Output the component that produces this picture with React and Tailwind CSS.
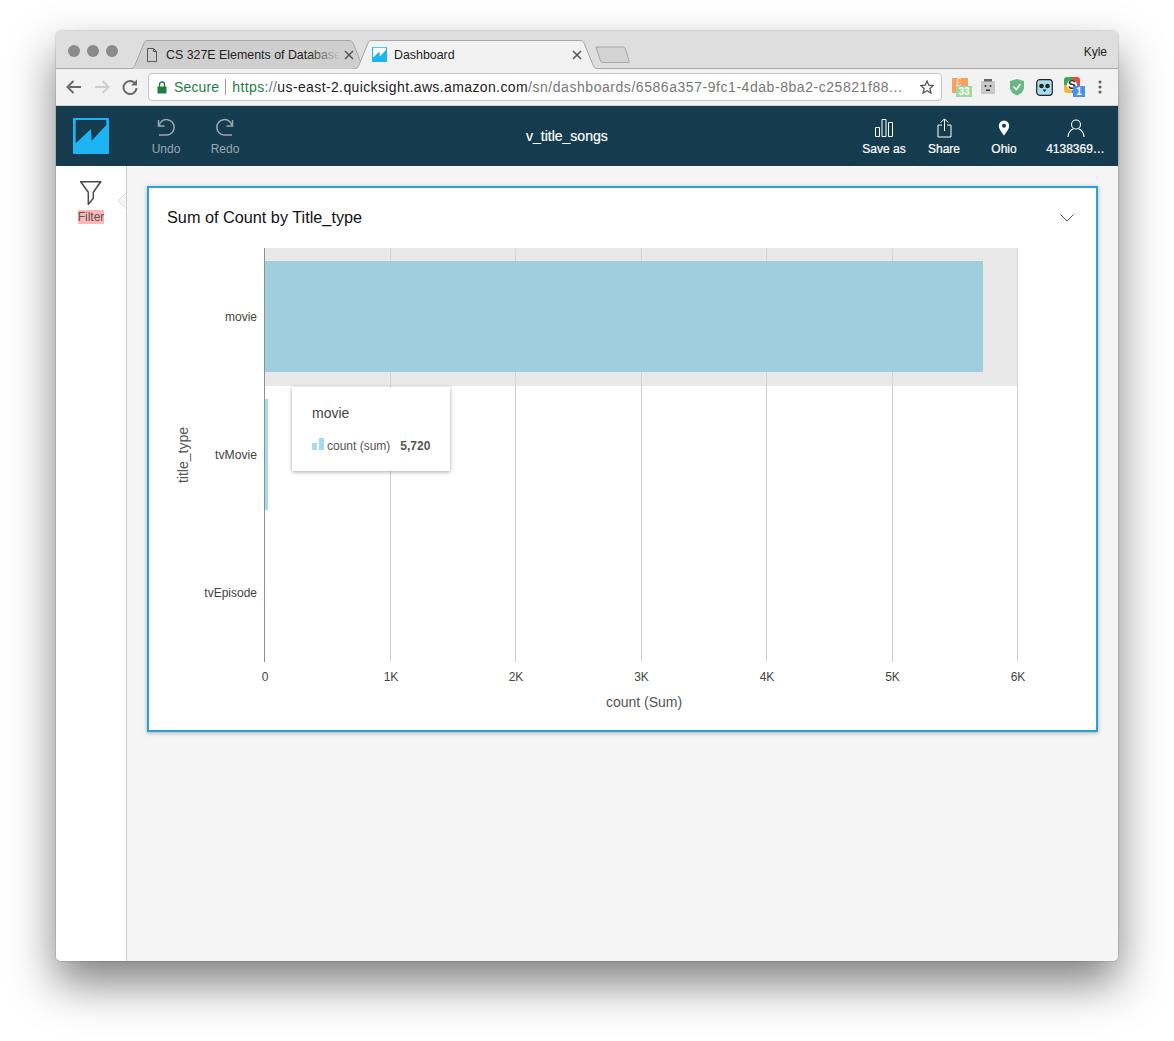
import React from "react";

const FONT = "font-['Liberation_Sans',Arial,sans-serif]";

function Logo({ size = 36, className = "", mark = "#153c4e" }) {
  return (
    <svg width={size} height={size} viewBox="0 0 36 36" className={className}>
      <rect width="36" height="36" rx="1" fill="#1cb4f2" />
      <path d="M2.700 2H33.300V7L18.700 22.700L18 11L2.700 25.300Z" fill={mark} />
    </svg>
  );
}

function TabShape({ w, fill, stroke }) {
  const d = `M0 29 H2 C5 29 6 27 7 25 L16 3 C17 1 18 0.500 20 0.500 H${w - 20} C${w - 18} 0.500 ${w - 17} 1 ${w - 16} 3 L${w - 7} 25 C${w - 6} 27 ${w - 5} 29 ${w - 2} 29 H${w}`;
  return (
    <svg className="absolute inset-0" width={w} height="29" viewBox={`0 0 ${w} 29`}>
      <path d={d} fill={fill} stroke={stroke} strokeWidth="1" />
    </svg>
  );
}

function CloseX({ color = "#555" }) {
  return (
    <svg width="10" height="10" viewBox="0 0 10 10" className="shrink-0">
      <path d="M1 1L9 9M9 1L1 9" stroke={color} strokeWidth="1.500" />
    </svg>
  );
}

function NavAction({ icon, label, className = "", dim }) {
  return (
    <div className={`flex flex-col items-center h-[60px] pt-[11px] ${className}`}>
      <div className="h-[22px] flex items-center justify-center">{icon}</div>
      <div className={`mt-[2px] text-[12px] leading-[16px] whitespace-nowrap ${dim ? "text-[#9aa7ae]" : "text-white font-medium [-webkit-text-stroke:0.2px_white]"}`}>
        {label}
      </div>
    </div>
  );
}

function Extensions() {
  return (
    <div className="flex items-center h-full">
      <div className="relative w-[22px] h-[20px] ml-[9px]">
        <div className="absolute left-[1px] top-[1px] w-[16px] h-[15px] bg-[#f5a15f]" />
        <div className="absolute left-[5px] top-0 text-[10px] leading-[12px] text-[#fde6d0]">£</div>
        <div className="absolute left-[5px] top-[9px] w-[16px] h-[11px] bg-[#9fd8a0] text-white text-[10px] leading-[11px] text-center font-bold">33</div>
      </div>
      <svg width="16" height="18" viewBox="0 0 16 18" className="ml-[7px]">
        <rect x="1" y="3" width="14" height="13" rx="1" fill="#c9c9c9" />
        <rect x="4" y="1" width="8" height="2.500" fill="#666" />
        <circle cx="5.500" cy="8" r="1" fill="#333" />
        <circle cx="10.500" cy="8" r="1" fill="#333" />
        <path d="M6 11.500H10V13H6Z" fill="#333" />
      </svg>
      <svg width="16" height="18" viewBox="0 0 16 18" className="ml-[13px]">
        <path d="M8 1L15 3V9C15 13 12 16 8 17.500C4 16 1 13 1 9V3Z" fill="#69b783" />
        <path d="M4.500 8.500L7.200 11.500L11.500 6" fill="none" stroke="#fff" strokeWidth="1.600" />
      </svg>
      <svg width="17" height="17" viewBox="0 0 17 17" className="ml-[11px]">
        <rect x="0.700" y="0.700" width="15.600" height="15.600" rx="3" fill="#a8dcef" stroke="#222" strokeWidth="1.200" />
        <circle cx="5.500" cy="7" r="2.300" fill="#222" />
        <circle cx="11.500" cy="7" r="2.300" fill="#222" />
        <path d="M6.500 10.500H10.500L8.500 13Z" fill="#222" />
      </svg>
      <div className="relative w-[21px] h-[20px] ml-[11px]">
        <svg width="16" height="16" viewBox="0 0 16 16" className="absolute left-0 top-0 rounded-[3px]">
          <rect x="0" y="0" width="8" height="8" fill="#39a85b" />
          <rect x="8" y="0" width="8" height="8" fill="#e2503f" />
          <rect x="0" y="8" width="8" height="8" fill="#f3b63c" />
          <rect x="8" y="8" width="8" height="8" fill="#4a8cf0" />
          <circle cx="8" cy="8" r="5" fill="#fff" />
        </svg>
        <div className="absolute left-[4px] top-[1px] text-[12px] leading-[14px] font-bold text-[#333]">S</div>
        <div className="absolute left-[9px] top-[9px] w-[12px] h-[11px] bg-[#4a90ea] text-white text-[10px] leading-[11px] text-center font-bold">1</div>
      </div>
      <svg width="4" height="14" viewBox="0 0 4 14" className="ml-[13px]">
        <circle cx="2" cy="2" r="1.500" fill="#5e5e5e" />
        <circle cx="2" cy="7" r="1.500" fill="#5e5e5e" />
        <circle cx="2" cy="12" r="1.500" fill="#5e5e5e" />
      </svg>
    </div>
  );
}

function Chart() {
  const grid = [390.5, 515.5, 641.5, 766.5, 892.5, 1017.5];
  const ticks = [[265, "0"], [391, "1K"], [516, "2K"], [641.5, "3K"], [767, "4K"], [892.5, "5K"], [1018, "6K"]];
  return (
    <svg width="946" height="482" viewBox="150 248 946 482" className="block ml-px" fontFamily="'Liberation Sans',Arial,sans-serif">
      <rect x="265" y="248" width="753" height="138" fill="#e9e9e9" />
      {grid.map((x) => (
        <line key={x} x1={x} x2={x} y1="248" y2="662" stroke="#d2d2d2" strokeWidth="1" />
      ))}
      <rect x="265" y="261" width="718" height="111" fill="#9fcfde" />
      <rect x="265" y="399" width="3" height="111" fill="#a3dcee" />
      <line x1="264.500" x2="264.500" y1="248" y2="662" stroke="#8f8f8f" strokeWidth="1" />
      <text x="257" y="321" textAnchor="end" fontSize="12" fill="#444">movie</text>
      <text x="257" y="459" textAnchor="end" fontSize="12.2" fill="#444">tvMovie</text>
      <text x="257" y="597" textAnchor="end" fontSize="12" fill="#444">tvEpisode</text>
      {ticks.map(([x, t]) => (
        <text key={t} x={x} y="681" textAnchor="middle" fontSize="12" fill="#444">{t}</text>
      ))}
      <text x="644" y="707" textAnchor="middle" fontSize="14" fill="#555">count (Sum)</text>
      <text transform="translate(188 455) rotate(-90)" textAnchor="middle" fontSize="14" fill="#555">title_type</text>
    </svg>
  );
}

const UndoGlyph = (
  <g fill="none" stroke="#9aa7ae" strokeWidth="1.500">
    <path d="M3 7.500A7.700 7.700 0 1 1 10.500 17H3" />
    <path d="M2.500 2V8H8.500" />
  </g>
);

export default function App() {
  return (
    <div className={`${FONT} w-[1174px] h-[1041px] bg-white pt-[31px] pl-[56px] overflow-hidden`}>
      <div className="w-[1062px] h-[930px] rounded-[5px] overflow-hidden flex flex-col shadow-[0_22px_45px_rgba(0,0,0,0.5),0_0_2px_rgba(0,0,0,0.35)]">
        {/* Title bar */}
        <div className="h-[38px] bg-[#dedede] relative flex items-end shrink-0 border-b border-[#a8a8a8]">
          <div className="absolute left-[12px] top-[14px] flex gap-[7px]">
            <div className="w-[12px] h-[12px] rounded-full bg-[#8b8b8b]" />
            <div className="w-[12px] h-[12px] rounded-full bg-[#8b8b8b]" />
            <div className="w-[12px] h-[12px] rounded-full bg-[#8b8b8b]" />
          </div>
          <div className="flex items-end ml-[72px] -mb-px">
            <div className="relative h-[29px] w-[241px] -mr-[17px]">
              <TabShape w={241} fill="#cfcfcf" stroke="#a6a6a6" />
              <div className="relative h-full flex items-center">
                <svg width="12" height="14" viewBox="0 0 12 14" className="ml-[18px] shrink-0">
                  <path d="M1.500 0.500H7.500L10.500 3.500V13.500H1.500Z M7.500 0.500V3.500H10.500" fill="none" stroke="#555" strokeWidth="1" />
                </svg>
                <div className="relative ml-[8px] w-[174px] overflow-hidden whitespace-nowrap text-[12.4px] leading-[16px] text-[#222]">
                  CS 327E Elements of Database
                  <div className="absolute right-0 top-0 bottom-0 w-[32px] bg-linear-to-r from-transparent to-[#cfcfcf]" />
                </div>
                <div className="ml-[4px]"><CloseX /></div>
              </div>
            </div>
            <div className="relative h-[29px] w-[248px] z-10">
              <TabShape w={248} fill="#f2f2f2" stroke="#a6a6a6" />
              <div className="relative h-full flex items-center">
                <Logo size={15} mark="#ffffff" className="ml-[20px] shrink-0" />
                <div className="ml-[7px] w-[178px] whitespace-nowrap text-[12.4px] leading-[16px] text-[#222]">Dashboard</div>
                <CloseX />
              </div>
            </div>
            <svg width="36" height="18" viewBox="0 0 36 18" className="-ml-[5px] mb-[5px]">
              <path d="M1 1H28C29 1 30 1.500 30.500 3L34 15C34.300 16 34 16.500 33 16.500H8C7 16.500 6 16 5.500 15L1 1Z" fill="#d4d4d4" stroke="#a6a6a6" />
            </svg>
          </div>
          <div className="absolute right-[11px] top-[13px] text-[12px] leading-[16px] text-[#222]">Kyle</div>
        </div>

        {/* Toolbar */}
        <div className="h-[37px] bg-[#f2f2f2] shrink-0 flex items-center border-b border-[#cfcfcf]">
          <svg width="16" height="14" viewBox="0 0 16 14" className="ml-[10px]">
            <path d="M15 7H2M7.500 1L1.500 7L7.500 13" fill="none" stroke="#6b6b6b" strokeWidth="2" />
          </svg>
          <svg width="16" height="14" viewBox="0 0 16 14" className="ml-[12px]">
            <path d="M1 7H14M8.500 1L14.500 7L8.500 13" fill="none" stroke="#cdcdcd" strokeWidth="2" />
          </svg>
          <svg width="16" height="16" viewBox="0 0 16 16" className="ml-[12px]">
            <path d="M13.500 5A6.500 6.500 0 1 0 14.500 9" fill="none" stroke="#6b6b6b" strokeWidth="2" />
            <path d="M15 0.500V6.500H9Z" fill="#6b6b6b" />
          </svg>
          <div className="ml-[10px] w-[794px] h-[28px] bg-white rounded-[4px] border border-[#c4c4c4] flex items-center whitespace-nowrap text-[14px] leading-[18px]">
            <svg width="10" height="13" viewBox="0 0 10 13" className="ml-[8px] shrink-0">
              <path d="M2.500 6V3.500A2.500 2.500 0 0 1 7.500 3.500V6" fill="none" stroke="#1e7e3e" strokeWidth="1.400" />
              <rect x="0.500" y="5.500" width="9" height="7" rx="0.700" fill="#1e7e3e" />
            </svg>
            <span className="ml-[7px] text-[#1e7e3e] tracking-[0.15px]">Secure</span>
            <span className="ml-[6px] w-px h-[16px] bg-[#9a9a9a]" />
            <span className="ml-[6px] text-[#1e7e3e] tracking-[0.38px]">https:</span>
            <span className="text-[#777] tracking-[0.38px]">//</span>
            <span className="text-[#222] tracking-[0.38px]">us-east-2.quicksight.aws.amazon.com</span>
            <span className="text-[#777] w-[376px] overflow-hidden tracking-[0.55px]">/sn/dashboards/6586a357-9fc1-4dab-8ba2-c25821f88...</span>
            <svg width="14" height="14" viewBox="0 0 14 14" className="ml-[16px] shrink-0">
              <path d="M7 1L8.800 5.200L13.300 5.600L9.900 8.600L10.900 13L7 10.700L3.100 13L4.100 8.600L0.700 5.600L5.200 5.200Z" fill="none" stroke="#555" strokeWidth="1.300" />
            </svg>
          </div>
          <Extensions />
        </div>

        {/* App nav */}
        <div className="h-[60px] bg-[#153c4e] shrink-0 flex items-center relative z-10">
          <Logo size={36} className="ml-[17px]" />
          <NavAction
            dim
            className="w-[60px] ml-[27px]"
            label="Undo"
            icon={<svg width="20" height="20" viewBox="0 0 20 20">{UndoGlyph}</svg>}
          />
          <NavAction
            dim
            className="w-[60px] -ml-px"
            label="Redo"
            icon={
              <svg width="20" height="20" viewBox="0 0 20 20">
                <g transform="translate(20 0) scale(-1 1)">{UndoGlyph}</g>
              </svg>
            }
          />
          <div className="absolute left-[470px] top-[21px] text-[14px] leading-[18px] text-white font-medium [-webkit-text-stroke:0.2px_white]">v_title_songs</div>
          <div className="ml-auto self-start flex items-start mr-[1px]">
            <NavAction
              className="w-[60px] border-b border-white h-[61px]"
              label="Save as"
              icon={
                <svg width="20" height="18" viewBox="0 0 20 18">
                  <path d="M1.500 8.500H5.500V17.500H1.500Z M8 0.500H12V17.500H8Z M14.500 3.500H18.500V17.500H14.500Z" fill="none" stroke="#fff" strokeWidth="1" />
                </svg>
              }
            />
            <NavAction
              className="w-[60px]"
              label="Share"
              icon={
                <svg width="15" height="20" viewBox="0 0 15 20">
                  <path d="M5 7H1V19H14V7H10" fill="none" stroke="#fff" strokeWidth="1" />
                  <path d="M7.500 13V1M3.800 4.500L7.500 0.800L11.200 4.500" fill="none" stroke="#fff" strokeWidth="1" />
                </svg>
              }
            />
            <NavAction
              className="w-[60px]"
              label="Ohio"
              icon={
                <svg width="12" height="16" viewBox="0 0 12 16">
                  <path fillRule="evenodd" d="M6 0.500A5.200 5.200 0 0 1 11.200 5.700C11.200 9 8 12.500 6 15.500C4 12.500 0.800 9 0.800 5.700A5.200 5.200 0 0 1 6 0.500ZM6 3.700A2 2 0 1 0 6 7.700A2 2 0 1 0 6 3.700Z" fill="#fff" />
                </svg>
              }
            />
            <NavAction
              className="w-[83px]"
              label="4138369…"
              icon={
                <svg width="18" height="19" viewBox="0 0 18 19">
                  <circle cx="9" cy="5.500" r="4.500" fill="none" stroke="#fff" strokeWidth="1.100" />
                  <path d="M1 18C1 13.500 4 10.500 6.500 9.800M17 18C17 13.500 14 10.500 11.500 9.800" fill="none" stroke="#fff" strokeWidth="1.100" />
                </svg>
              }
            />
          </div>
        </div>

        {/* Body */}
        <div className="flex-1 flex min-h-0">
          <div className="w-[71px] bg-white border-r border-[#cfcfcf] relative flex flex-col items-center pt-[14px] shrink-0">
            <svg width="23" height="25" viewBox="0 0 23 25" className="-ml-px">
              <path d="M1.700 1.700H21.700L14.300 12.300V18.300L9.300 24.300V12.300Z" fill="none" stroke="#4a4a4a" strokeWidth="1.500" strokeLinejoin="round" />
            </svg>
            <div className="mt-[5px] bg-[#ffb7b7] text-[12px] leading-[14px] text-[#555]">Filter</div>
            <svg width="9" height="16" viewBox="0 0 9 16" className="absolute right-0 top-[27px]">
              <path d="M9 0L1 8L9 16" fill="#f5f5f5" />
              <path d="M9 0L1 8L9 16" fill="none" stroke="#dcdcdc" strokeWidth="1" />
            </svg>
          </div>
          <div className="flex-1 bg-[#f5f5f5] pt-[20px] pl-[20px] pr-[20px]">
            <div className="relative w-[951px] h-[546px] bg-white border-2 border-[#2a9fd8] shadow-[0_1px_4px_rgba(0,0,0,0.3)]">
              <div className="h-[60px] pl-[18px] pr-[22px] flex items-center justify-between">
                <div className="text-[16.25px] leading-[20px] text-[#111] mt-[-3px]">Sum of Count by Title_type</div>
                <svg width="14" height="8" viewBox="0 0 14 8">
                  <path d="M0.500 0.500L7 7L13.500 0.500" fill="none" stroke="#555" strokeWidth="1" />
                </svg>
              </div>
              <Chart />
              <div className="absolute left-[143px] top-[199px] w-[158px] h-[84px] bg-white shadow-[0_1px_4px_rgba(0,0,0,0.35)] pl-[20px] pt-[17px]">
                <div className="text-[14px] leading-[18px] text-[#444]">movie</div>
                <div className="flex items-end mt-[15px] h-[16px]">
                  <svg width="12" height="12" viewBox="0 0 12 12" className="mb-[3px]">
                    <rect x="0" y="5" width="5" height="7" fill="#a3dcee" />
                    <rect x="7" y="0" width="5" height="12" fill="#a3dcee" />
                  </svg>
                  <span className="ml-[3px] text-[12px] leading-[14px] text-[#555]">count (sum)</span>
                  <span className="ml-[10px] text-[12px] leading-[14px] font-bold text-[#555]">5,720</span>
                </div>
              </div>
            </div>
          </div>
        </div>
      </div>
    </div>
  );
}
